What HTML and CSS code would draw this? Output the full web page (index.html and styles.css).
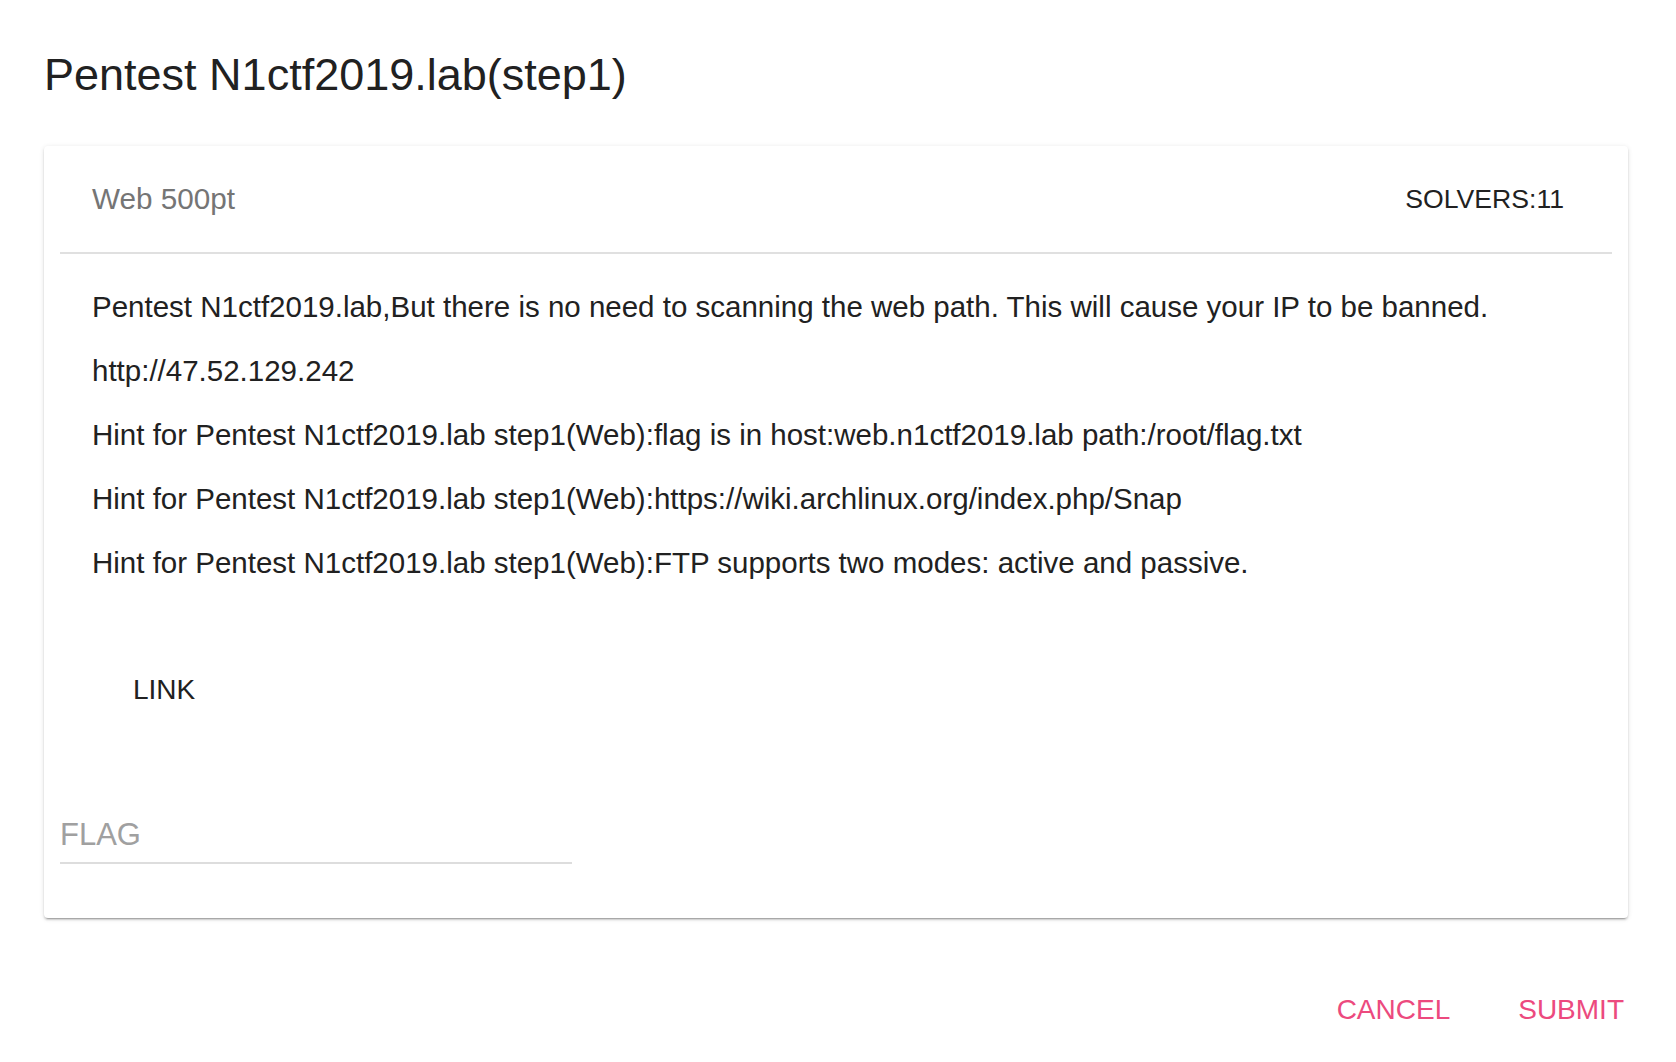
FILE: index.html
```html
<!DOCTYPE html>
<html lang="en">
<head>
<meta charset="utf-8">
<title>Pentest N1ctf2019.lab(step1)</title>
<link rel="stylesheet" href="styles.css">
</head>
<body>
<div class="dialog">
  <h1 class="dialog-title">Pentest N1ctf2019.lab(step1)</h1>
  <div class="card">
    <div class="card-head">
      <span class="category">Web 500pt</span>
      <span class="solvers">SOLVERS:11</span>
    </div>
    <div class="card-text">
      <p>Pentest N1ctf2019.lab,But there is no need to scanning the web path. This will cause your IP to be banned.</p>
      <p>http://47.52.129.242</p>
      <p>Hint for Pentest N1ctf2019.lab step1(Web):flag is in host:web.n1ctf2019.lab path:/root/flag.txt</p>
      <p>Hint for Pentest N1ctf2019.lab step1(Web):https://wiki.archlinux.org/index.php/Snap</p>
      <p>Hint for Pentest N1ctf2019.lab step1(Web):FTP supports two modes: active and passive.</p>
    </div>
    <div class="link-row"><a class="link-btn" href="#">LINK</a></div>
    <div class="flag-field">
      <input class="flag-input" type="text" placeholder="FLAG">
    </div>
  </div>
  <div class="actions">
    <button class="action-btn" type="button">CANCEL</button>
    <button class="action-btn" type="button">SUBMIT</button>
  </div>
</div>
</body>
</html>
```

FILE: styles.css
```css
html, body {
  margin: 0;
  padding: 0;
  background: #ffffff;
}

body {
  font-family: "Liberation Sans", Helvetica, Arial, sans-serif;
  color: #212121;
}

.dialog {
  padding: 0 48px 0 44px;
}

.dialog-title {
  margin: 0 0 45px;
  padding-top: 49px;
  font-size: 45px;
  line-height: 52px;
  font-weight: 400;
  color: #212121;
}

.card {
  background: #fff;
  border-radius: 4px;
  padding: 0 16px 54px;
  box-shadow: 0 3px 1px -2px rgba(0, 0, 0, 0.2), 0 2px 2px 0 rgba(0, 0, 0, 0.14), 0 1px 5px 0 rgba(0, 0, 0, 0.12);
}

.card-head {
  display: flex;
  justify-content: space-between;
  align-items: center;
  height: 106px;
  padding: 0 48px 0 32px;
  border-bottom: 2px solid #e0e0e0;
  font-size: 29.7px;
  line-height: 32px;
}

.category {
  color: #757575;
}

.solvers {
  color: #212121;
  font-size: 26.6px;
}

.card-text {
  display: flex;
  flex-direction: column;
  gap: 32px;
  padding: 37px 32px 0;
}

.card-text p {
  margin: 0;
  font-size: 29.5px;
  line-height: 32px;
  color: #212121;
}

.link-row {
  margin-top: 95px;
  padding-left: 73px;
  font-size: 28px;
  line-height: 32px;
}

.link-btn {
  color: #212121;
  text-decoration: none;
}

.flag-field {
  margin-top: 111px;
  width: 512px;
  padding-bottom: 9px;
  border-bottom: 2px solid #dddddd;
}

.flag-input {
  display: block;
  width: 100%;
  border: 0;
  outline: none;
  padding: 0;
  margin: 0;
  background: transparent;
  font-family: inherit;
  font-size: 31px;
  line-height: 36px;
  height: 36px;
  color: #212121;
}

.flag-input::placeholder {
  color: #a0a0a0;
}

.actions {
  display: flex;
  justify-content: flex-end;
  gap: 68px;
  margin-top: 76px;
  padding-right: 4px;
}

.action-btn {
  border: 0;
  background: transparent;
  padding: 0;
  margin: 0;
  font-family: inherit;
  font-size: 28px;
  line-height: 32px;
  color: #ec4a7e;
  cursor: pointer;
}
```
